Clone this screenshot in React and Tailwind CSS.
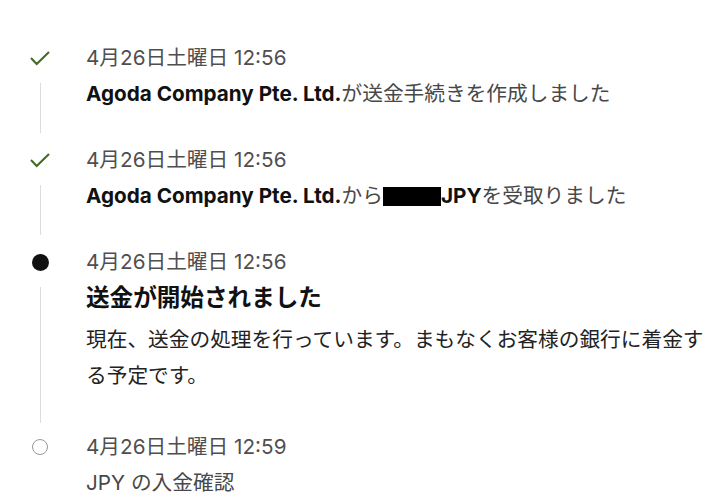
import React from "react";

const font = { fontFamily: 'Inter, "Noto Sans CJK JP", sans-serif' };

function CheckIcon() {
  return (
    <svg width="20" height="20" viewBox="0 0 20 20" fill="none">
      <polyline
        points="1,10 6.7,16 19,4"
        stroke="#3f6b22"
        strokeWidth="2"
        strokeLinecap="butt"
        strokeLinejoin="miter"
      />
    </svg>
  );
}

function Item({ icon, date, children, line = true, last = false, pb = "pb-[30px]", lineMb = "-mb-[21px]" }) {
  return (
    <div className={`flex gap-[36px] ${last ? "" : pb}`}>
      <div className="w-[20px] flex flex-col items-center shrink-0">
        <div className="h-[36px] flex items-center justify-center">{icon}</div>
        {line && <div className={`flex-1 w-px bg-[#dcdcdc] mt-[7px] ${lineMb}`} />}
      </div>
      <div className="flex-1 min-w-0">
        <div className="h-[36px] leading-[36px] text-[#4f4f4f]">{date}</div>
        {children}
      </div>
    </div>
  );
}

export default function App() {
  return (
    <div className="bg-white min-h-[501px] pt-[40px] pl-[30px] pr-[6px] text-[20.7px]" style={font}>
      <Item icon={<CheckIcon />} date="4月26日土曜日 12:56">
        <div className="leading-[36px] text-[#484848]">
          <span className="font-bold text-[#111]">Agoda Company Pte. Ltd.</span>
          が送金手続きを作成しました
        </div>
      </Item>
      <Item icon={<CheckIcon />} date="4月26日土曜日 12:56">
        <div className="leading-[36px] text-[#484848]">
          <span className="font-bold text-[#111]">Agoda Company Pte. Ltd.</span>
          から
          <span className="inline-block align-[-3px] w-[58px] h-[19px] bg-black" />
          <span className="font-bold text-[#111]">JPY</span>
          を受取りました
        </div>
      </Item>
      <Item
        icon={<div className="w-[17px] h-[17px] rounded-full bg-[#111]" />}
        date="4月26日土曜日 12:56"
        pb="pb-[35px]"
        lineMb="-mb-[29px]"
      >
        <div className="leading-[36px] text-[23.6px] font-bold text-[#111]">送金が開始されました</div>
        <div className="mt-[6px] leading-[36px] text-[#222]">
          現在、送金の処理を行っています。まもなくお客様の銀行に着金する予定です。
        </div>
      </Item>
      <Item
        icon={<div className="w-[16px] h-[16px] rounded-full border border-[#999]" />}
        date="4月26日土曜日 12:59"
        line={false}
        last
      >
        <div className="leading-[36px] text-[#484848]">JPY の入金確認</div>
      </Item>
    </div>
  );
}
